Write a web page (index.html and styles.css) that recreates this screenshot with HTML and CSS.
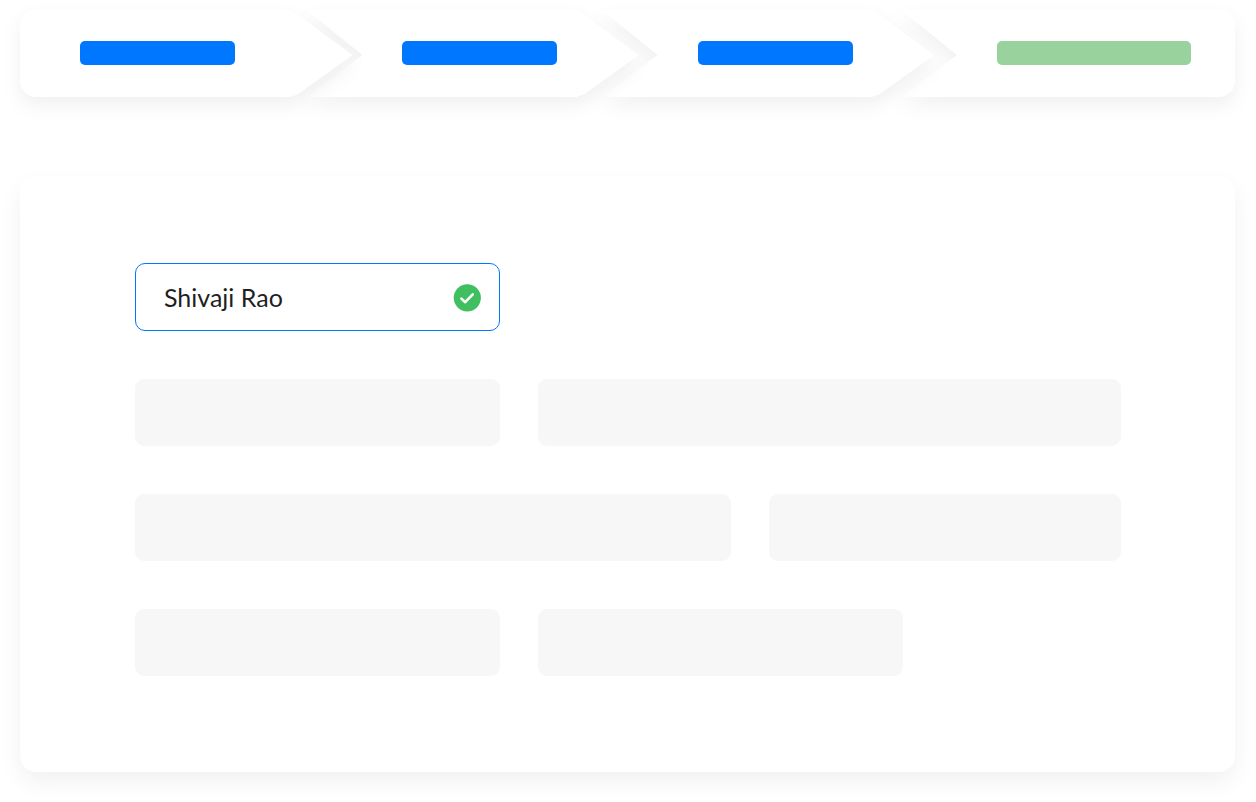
FILE: index.html
```html
<!DOCTYPE html>
<html lang="en">
<head>
  <meta charset="UTF-8">
  <meta name="viewport" content="width=device-width, initial-scale=1.0">
  <title>Application Form</title>
  <link rel="stylesheet" href="styles.css">
</head>
<body>
  <ol class="steps">
    <li class="step"><div class="step-shape"><span class="step-bar"></span></div></li>
    <li class="step"><div class="step-shape"><span class="step-bar"></span></div></li>
    <li class="step"><div class="step-shape"><span class="step-bar"></span></div></li>
    <li class="step"><div class="step-shape"><span class="step-bar done"></span></div></li>
  </ol>

  <main class="card">
    <form class="form">
      <div class="row thirds">
        <div class="field">
          <input type="text" class="field-input" aria-label="Full name" value="Shivaji Rao">
          <svg class="field-check" viewBox="0 0 28 28" aria-hidden="true">
            <circle cx="14.3" cy="13.8" r="13.6" fill="#3fbf60"/>
            <path d="M8.4 14.6 L12.2 18.2 L19.8 10.4" fill="none" stroke="#fff" stroke-width="2.6" stroke-linecap="round" stroke-linejoin="round"/>
          </svg>
        </div>
      </div>

      <!-- Fields still loading -->
      <div class="row narrow-wide">
        <div class="skeleton"></div>
        <div class="skeleton"></div>
      </div>
      <div class="row wide-narrow">
        <div class="skeleton"></div>
        <div class="skeleton"></div>
      </div>
      <div class="row thirds">
        <div class="skeleton"></div>
        <div class="skeleton"></div>
      </div>
    </form>
  </main>
</body>
</html>
```

FILE: styles.css
```css
* {
  box-sizing: border-box;
}

body {
  margin: 0;
  padding: 10px 21px 30px 20px;
  background-color: #fff;
  font-family: Lato, "Open Sans", sans-serif;
  color: #1f1f1f;
}

/* Progress steps */
.steps {
  display: flex;
  margin: 0 0 79px;
  padding: 0;
  list-style: none;
}

.step {
  position: relative;
  flex: 1;
  filter: drop-shadow(0 8px 9px rgba(0, 0, 0, 0.06));
}

/* earlier steps cast their shadow over later ones */
.step:nth-child(1) {
  z-index: 4;
}

.step:nth-child(2) {
  z-index: 3;
  margin-left: -46px;
}

.step:nth-child(3) {
  z-index: 2;
  margin-left: -37px;
}

.step:nth-child(4) {
  z-index: 1;
  margin-left: -33px;
}

.step-shape {
  display: flex;
  align-items: center;
  height: 87px;
  padding: 0 44px 2px 96px;
  background-color: #fff;
  clip-path: polygon(0 0, calc(100% - 64px) 0, calc(100% - 56px) 4px, 100% 45px, calc(100% - 54px) 84px, calc(100% - 62px) 100%, 0 100%, 56px 45px);
}

.step:first-child .step-shape {
  padding-left: 60px;
  border-radius: 16px 0 0 16px;
  clip-path: polygon(0 0, calc(100% - 64px) 0, calc(100% - 56px) 4px, 100% 45px, calc(100% - 54px) 84px, calc(100% - 62px) 100%, 0 100%);
}

.step:last-child .step-shape {
  border-radius: 0 16px 16px 0;
  clip-path: polygon(0 0, 100% 0, 100% 100%, 0 100%, 56px 45px);
}

.step-bar {
  width: 155px;
  height: 24px;
  border-radius: 5px;
  background-color: #0077ff;
}

.step-bar.done {
  width: 194px;
  background-color: #9ad29e;
}

/* Form card */
.card {
  padding: 87px 114px 96px 115px;
  border-radius: 16px;
  background-color: #fff;
  box-shadow: 0 10px 24px rgba(0, 0, 0, 0.06);
}

.form {
  display: grid;
  gap: 48px;
}

.row {
  display: grid;
  gap: 38px;
}

.thirds {
  grid-template-columns: 365fr 365fr 180fr;
}

.narrow-wide {
  grid-template-columns: 365fr 583fr;
}

.wide-narrow {
  grid-template-columns: 596fr 352fr;
}

.field {
  position: relative;
}

.field-input {
  display: block;
  width: 100%;
  height: 68px;
  padding: 0 56px 0 28px;
  border: 1px solid #0077ff;
  border-radius: 10px;
  background-color: #fff;
  font: inherit;
  font-size: 25px;
  color: inherit;
}

.field-check {
  position: absolute;
  top: 21px;
  right: 19px;
  width: 28px;
  height: 28px;
}

.skeleton {
  height: 67px;
  border-radius: 9px;
  background-color: #f7f7f7;
}
```
